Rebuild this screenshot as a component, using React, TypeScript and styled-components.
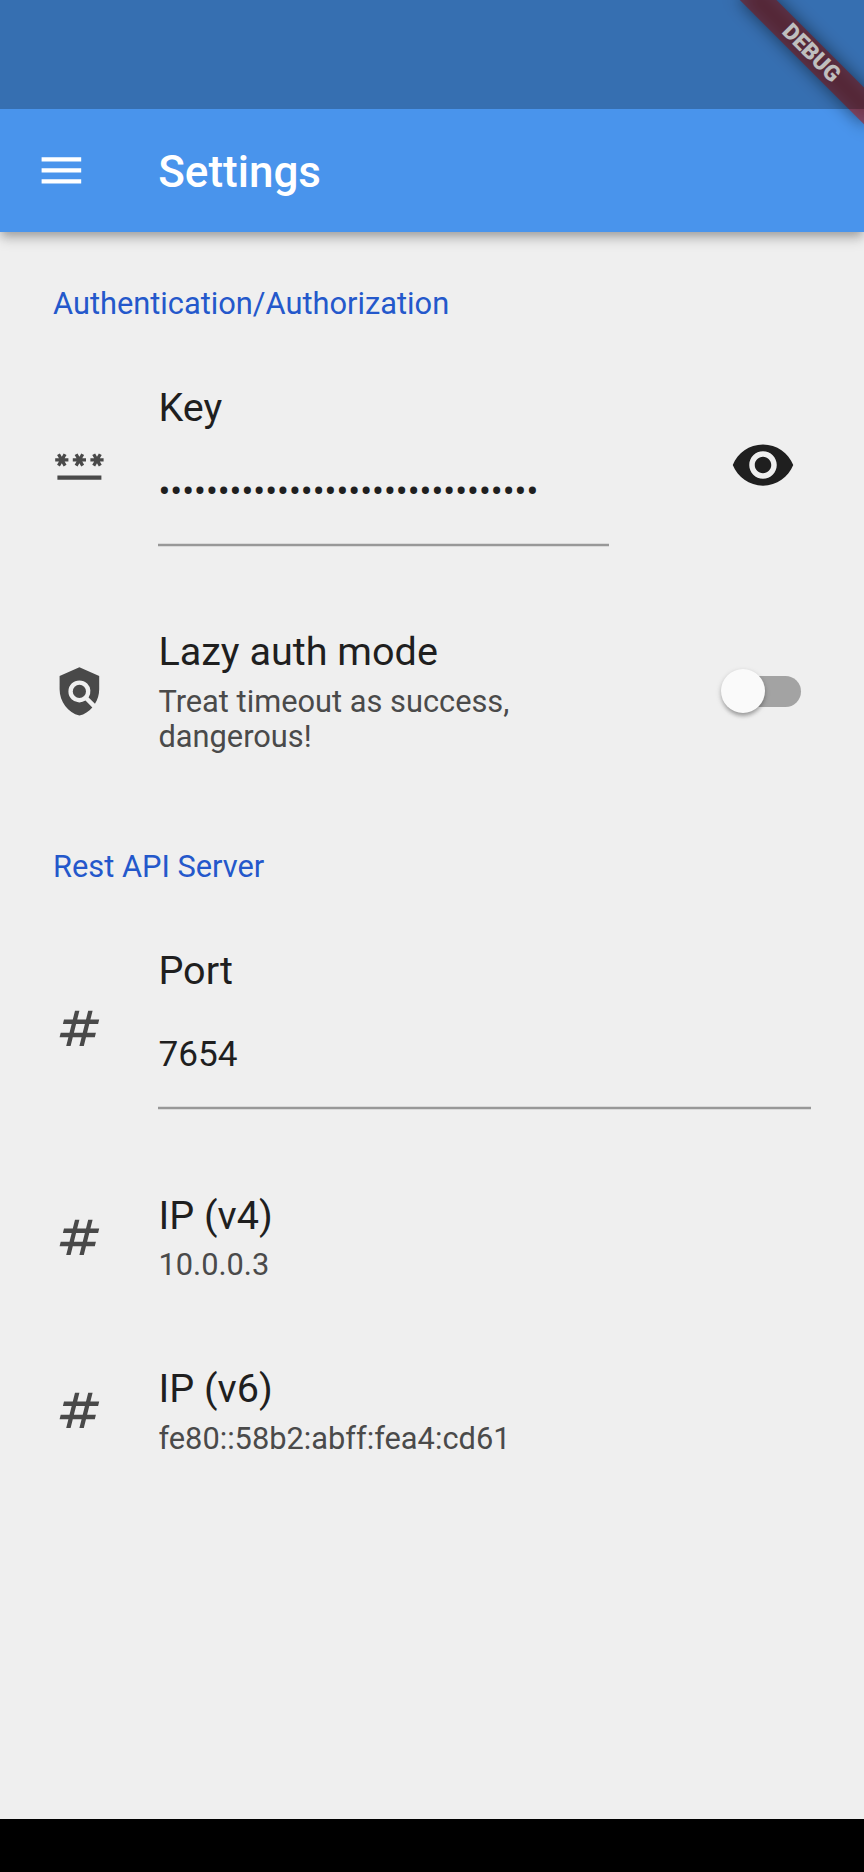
import React, { useState } from "react";
import styled, { createGlobalStyle } from "styled-components";
import { MdMenu, MdNumbers, MdPassword, MdPolicy, MdVisibility } from "react-icons/md";

const GlobalStyle = createGlobalStyle`
  * { box-sizing: border-box; }
  body { margin: 0; background: #efefef; font-family: Roboto, "Liberation Sans", sans-serif; }
`;

const Screen = styled.div`
  position: relative;
  display: flex;
  flex-direction: column;
  width: 864px;
  height: 1872px;
  overflow: hidden;
  background: #efefef;
`;

const Header = styled.header`
  flex: none;
  padding-top: 109px;
  background: #4994ec;
  box-shadow: 0 5px 9px -2.2px rgba(0, 0, 0, 0.24), 0 8px 12px 0 rgba(0, 0, 0, 0.14);
`;

const Toolbar = styled.div`
  display: flex;
  align-items: center;
  height: 123px;
  padding-left: 35px;
`;

const IconButton = styled.button`
  display: flex;
  padding: 0;
  border: 0;
  background: none;
  color: inherit;
`;

const MenuButton = styled(IconButton)`
  margin-right: 70.4px;
  color: #fff;
`;

const PageTitle = styled.h1`
  margin: 0;
  padding-top: 3px;
  color: #fff;
  font-size: 44px;
  font-weight: 500;
  line-height: 52px;
`;

const StatusScrim = styled.div`
  position: absolute;
  inset: 0 0 auto 0;
  height: 109px;
  background: rgba(0, 0, 0, 0.25);
`;

const DebugRibbon = styled.div`
  position: absolute;
  top: 61.6px;
  left: 776px;
  width: 176px;
  height: 26.4px;
  transform: rotate(45deg);
  transform-origin: 88px -61.6px;
  color: #fff;
  font-size: 22.44px;
  font-weight: 900;
  line-height: 24.4px;
  text-align: center;

  &::before {
    content: "";
    position: absolute;
    inset: 0;
    background: rgba(0, 0, 0, 0.5);
    filter: blur(8.7px);
  }
`;

const RibbonLabel = styled.span`
  position: absolute;
  inset: 0;
  background: rgba(157, 36, 42, 0.627);
`;

const Settings = styled.main`
  flex: 1;
  min-height: 0;
`;

const SectionTitle = styled.h2`
  margin: 0;
  padding: 53.5px 53px 20.5px;
  color: #2458cb;
  font-size: 30.8px;
  font-weight: 400;
  line-height: 36px;
`;

const Tile = styled.div<{ $height: number }>`
  display: flex;
  align-items: center;
  height: ${(p) => p.$height}px;
  padding: 0 53px;
`;

const Leading = styled.div`
  display: flex;
  flex: none;
  width: 105.4px;
  color: #494949;
`;

const TileText = styled.div<{ $top: number }>`
  flex: 1;
  align-self: flex-start;
  min-width: 0;
  padding-top: ${(p) => p.$top}px;
`;

const TileTitle = styled.div`
  color: #1f1f1f;
  font-size: 39.6px;
  line-height: 46px;
  white-space: nowrap;
`;

const TileSubtitle = styled.div<{ $gap: number }>`
  margin-top: ${(p) => p.$gap}px;
  color: #4a4a4a;
  font-size: 30.8px;
  line-height: 35px;
`;

const Field = styled.div`
  margin-top: 39.5px;
  padding-bottom: 31px;
  color: #1f1f1f;
  font-size: 35.2px;
  line-height: 42px;
  white-space: nowrap;
`;

const Underline = styled.div`
  height: 4px;
  border: solid #dadada;
  border-width: 1px 0;
  background: #989898;
`;

const Trailing = styled.div<{ $inset: number }>`
  display: flex;
  flex: none;
  justify-content: flex-end;
  width: 202px;
  padding-right: ${(p) => p.$inset}px;
  color: #1f1f1f;
`;

const SwitchTrack = styled.button<{ $on: boolean }>`
  display: flex;
  align-items: center;
  justify-content: ${(p) => (p.$on ? "flex-end" : "flex-start")};
  width: 72.6px;
  height: 31px;
  padding: 0;
  border: 0;
  border-radius: 16px;
  background: ${(p) => (p.$on ? "#9cc3f4" : "#a3a3a3")};
`;

const SwitchThumb = styled.span`
  flex: none;
  width: 44px;
  height: 44px;
  margin: 0 -6.6px;
  border-radius: 50%;
  background: #fafafa;
  box-shadow: 0 4.4px 4px -2.2px rgba(0, 0, 0, 0.2), 0 2.2px 4px rgba(0, 0, 0, 0.14),
    0 2.2px 6.6px rgba(0, 0, 0, 0.12);
`;

const BottomBar = styled.footer`
  flex: none;
  height: 53px;
  background: #000;
`;

const ICON = 52.8;

export default function App() {
  const [lazy, setLazy] = useState(false);
  const [visible, setVisible] = useState(false);
  return (
    <Screen>
      <GlobalStyle />
      <Header>
        <Toolbar>
          <MenuButton aria-label="Menu">
            <MdMenu size={ICON} />
          </MenuButton>
          <PageTitle>Settings</PageTitle>
        </Toolbar>
      </Header>

      <Settings>
        <SectionTitle>Authentication/Authorization</SectionTitle>
        <Tile $height={245}>
          <Leading>
            <MdPassword size={ICON} />
          </Leading>
          <TileText $top={42.5}>
            <TileTitle>Key</TileTitle>
            <Field>{"•".repeat(32)}</Field>
            <Underline />
          </TileText>
          <Trailing $inset={15}>
            <IconButton aria-label="Show key" aria-pressed={visible} onClick={() => setVisible(!visible)}>
              <MdVisibility size={66} />
            </IconButton>
          </Trailing>
        </Tile>
        <Tile $height={208}>
          <Leading>
            <MdPolicy size={ICON} />
          </Leading>
          <TileText $top={41.5}>
            <TileTitle>Lazy auth mode</TileTitle>
            <TileSubtitle $gap={9.5}>Treat timeout as success, dangerous!</TileSubtitle>
          </TileText>
          <Trailing $inset={10.5}>
            <SwitchTrack $on={lazy} role="switch" aria-checked={lazy} onClick={() => setLazy(!lazy)}>
              <SwitchThumb />
            </SwitchTrack>
          </Trailing>
        </Tile>

        <SectionTitle>Rest API Server</SectionTitle>
        <Tile $height={246}>
          <Leading>
            <MdNumbers size={ICON} />
          </Leading>
          <TileText $top={42.5}>
            <TileTitle>Port</TileTitle>
            <Field>7654</Field>
            <Underline />
          </TileText>
        </Tile>
        <Tile $height={173}>
          <Leading>
            <MdNumbers size={ICON} />
          </Leading>
          <TileText $top={41.5}>
            <TileTitle>IP (v4)</TileTitle>
            <TileSubtitle $gap={8.5}>10.0.0.3</TileSubtitle>
          </TileText>
        </Tile>
        <Tile $height={173}>
          <Leading>
            <MdNumbers size={ICON} />
          </Leading>
          <TileText $top={42}>
            <TileTitle>IP (v6)</TileTitle>
            <TileSubtitle $gap={8.5}>fe80::58b2:abff:fea4:cd61</TileSubtitle>
          </TileText>
        </Tile>
      </Settings>

      <BottomBar />
      <DebugRibbon>
        <RibbonLabel>DEBUG</RibbonLabel>
      </DebugRibbon>
      <StatusScrim />
    </Screen>
  );
}
